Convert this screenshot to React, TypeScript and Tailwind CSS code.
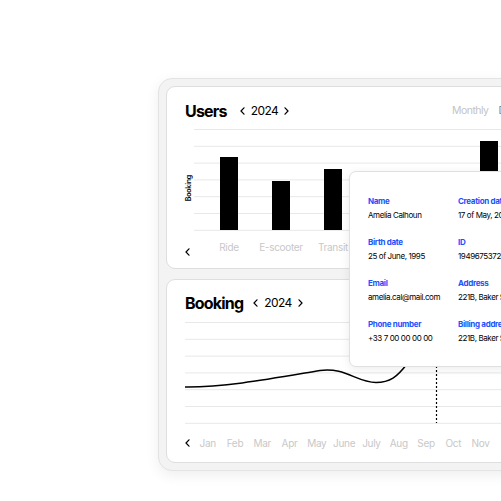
import React from "react";

const font = { fontFamily: "Inter, 'Noto Sans', sans-serif" };

function Chevron({ dir }: { dir: "left" | "right" }) {
  return (
    <svg viewBox="0 0 5 8" className="h-[8px] w-[5px]" fill="none" aria-hidden="true">
      <path
        d={dir === "left" ? "M4 0.8 1 4l3 3.2" : "M1 0.8 4 4 1 7.2"}
        stroke="currentColor"
        strokeWidth="1.2"
        strokeLinecap="round"
        strokeLinejoin="round"
      />
    </svg>
  );
}

function YearPicker() {
  return (
    <div className="flex items-center gap-[6px] text-[12px] tracking-[-0.05em] text-black">
      <Chevron dir="left" />
      <span>2024</span>
      <Chevron dir="right" />
    </div>
  );
}

const gridY = [0.5, 17.3, 34.1, 50.9, 67.7, 84.5, 101.3];

const bars = [
  { x: 26, top: 28 },
  { x: 78, top: 52 },
  { x: 130, top: 40 },
  { x: 182, top: 58 },
  { x: 234, top: 48 },
  { x: 286, top: 12 },
];

const months = ["Jan", "Feb", "Mar", "Apr", "May", "June", "July", "Aug", "Sep", "Oct", "Nov"];

const fields = [
  ["Name", "Amelia Calhoun", "Creation date", "17 of May, 2023"],
  ["Birth date", "25 of June, 1995", "ID", "194967537201"],
  ["Email", "amelia.cal@mail.com", "Address", "221B, Baker Street"],
  ["Phone number", "+33 7 00 00 00 00", "Billing address", "221B, Baker Street"],
];

function UsersCard() {
  return (
    <div className="h-[183px] overflow-hidden rounded-[9px] border border-[#dedede] bg-white pl-[18px] pt-[14px]">
      <div className="flex h-[20px] items-center">
        <div className="flex w-[267px] shrink-0 items-center">
          <span className="text-[16px] font-bold tracking-[-0.05em] text-black">Users</span>
          <div className="ml-[13px]">
            <YearPicker />
          </div>
        </div>
        <div className="flex shrink-0 gap-[10px] text-[10.5px] tracking-[-0.05em]">
          <span className="text-[#c4c4c4]">Monthly</span>
          <span className="text-[#8a8a8a]">Daily</span>
        </div>
      </div>

      <div className="mt-[8px] flex">
        <div className="flex w-[9px] items-center justify-center pt-[16px]">
          <span className="rotate-180 text-[7px] font-semibold tracking-[-0.03em] text-black [writing-mode:vertical-rl]">
            Booking
          </span>
        </div>
        <svg width="320" height="102" className="shrink-0" aria-hidden="true">
          {gridY.map((y) => (
            <line key={y} x1="0" x2="320" y1={y} y2={y} stroke="#e8e8e8" strokeWidth="1" />
          ))}
          {bars.map((b) => (
            <rect key={b.x} x={b.x} y={b.top} width="18" height={101 - b.top} fill="#000" />
          ))}
        </svg>
      </div>

      <div className="mt-[10px] flex">
        <div className="w-[18px] pt-[7px] text-black">
          <Chevron dir="left" />
        </div>
        {["Ride", "E-scooter", "Transit"].map((l) => (
          <div key={l} className="w-[52px] shrink-0 text-center text-[10px] leading-[12px] tracking-[-0.03em] text-[#c8c8c8]">
            {l}
          </div>
        ))}
      </div>
    </div>
  );
}

function BookingCard() {
  return (
    <div className="h-[184px] overflow-hidden rounded-[9px] border border-[#dedede] bg-white pl-[18px] pt-[13px]">
      <div className="flex h-[20px] items-center">
        <span className="text-[16px] font-bold tracking-[-0.05em] text-black">Booking</span>
        <div className="ml-[10px]">
          <YearPicker />
        </div>
      </div>

      <svg width="330" height="102" className="mt-[9px]" aria-hidden="true">
        {gridY.map((y) => (
          <line key={y} x1="0" x2="330" y1={y} y2={y} stroke="#e8e8e8" strokeWidth="1" />
        ))}
        <path
          d="M0 65 C 40 65.5, 90 56, 135 48.5 C 160 45, 172 60.5, 191 60.5 C 205 60.5, 212 55, 222 42 C 232 28, 245 8, 262 0"
          fill="none"
          stroke="#000"
          strokeWidth="1.5"
        />
        <line x1="251.5" x2="251.5" y1="0" y2="101" stroke="#000" strokeWidth="1.2" strokeDasharray="2 2" />
      </svg>

      <div className="mt-[13px] flex items-center">
        <div className="w-[9px] text-black">
          <Chevron dir="left" />
        </div>
        {months.map((m) => (
          <div key={m} className="w-[27.3px] shrink-0 text-center text-[10px] leading-[12px] tracking-[-0.03em] text-[#c8c8c8]">
            {m}
          </div>
        ))}
      </div>
    </div>
  );
}

function DetailsPopup() {
  return (
    <div className="absolute left-[190px] top-[92px] h-[196px] w-[240px] rounded-[7px] border border-[#e0e0e0] bg-white pl-[18px] pt-[24px] shadow-[0_2px_10px_rgba(0,0,0,0.08)]">
      {fields.map(([l1, v1, l2, v2]) => (
        <div key={l1} className="flex h-[41px]">
          {[
            [l1, v1],
            [l2, v2],
          ].map(([l, v]) => (
            <div key={l} className="w-[90px] shrink-0 whitespace-nowrap">
              <div className="text-[8px] font-bold leading-[10px] tracking-[-0.04em] text-[#2150ff]">{l}</div>
              <div className="mt-[3.5px] text-[8px] leading-[10px] tracking-[-0.05em] text-black">{v}</div>
            </div>
          ))}
        </div>
      ))}
    </div>
  );
}

export default function App() {
  return (
    <div className="h-[501px] w-[501px] overflow-hidden bg-white" style={font}>
      <div className="pl-[158px] pt-[78px]">
        <div className="relative w-[420px] rounded-[14px] border border-[#e3e3e3] bg-[#f3f3f3] p-[7px] shadow-[0_4px_14px_rgba(0,0,0,0.07)]">
          <div className="flex flex-col gap-[10px]">
            <UsersCard />
            <BookingCard />
          </div>
          <DetailsPopup />
        </div>
      </div>
    </div>
  );
}
